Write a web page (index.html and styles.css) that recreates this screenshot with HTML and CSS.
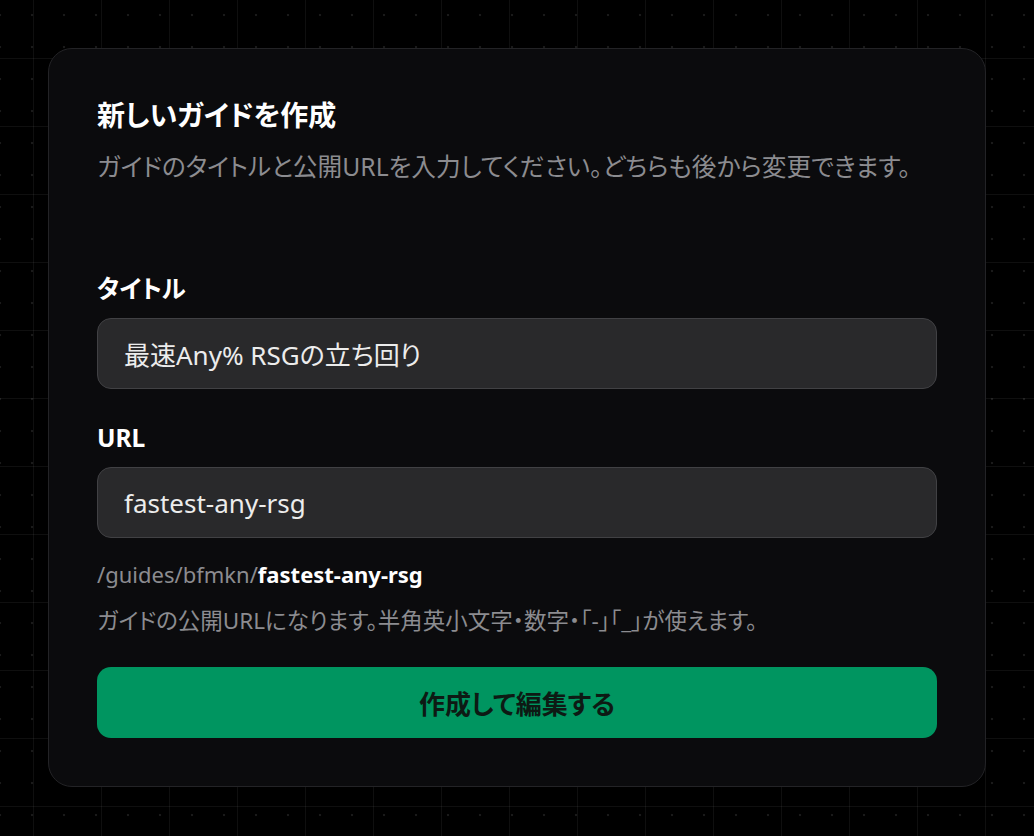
FILE: index.html
```html
<!DOCTYPE html>
<html lang="ja">
<head>
<meta charset="utf-8">
<title>新しいガイドを作成</title>
<link rel="stylesheet" href="styles.css">
</head>
<body>
<main class="page">
  <form class="card">
    <h1 class="title">新しいガイドを作成</h1>
    <p class="lead">ガイドのタイトルと公開URLを入力してください。どちらも後から変更できます。</p>

    <div class="field field-first">
      <label class="label" for="t">タイトル</label>
      <input class="input" id="t" type="text" value="最速Any% RSGの立ち回り">
    </div>

    <div class="field">
      <label class="label" for="u">URL</label>
      <input class="input" id="u" type="text" value="fastest-any-rsg">
      <p class="path">/guides/bfmkn/<strong>fastest-any-rsg</strong></p>
      <p class="hint">ガイドの公開URLになります。半角英小文字・数字・「-」「_」が使えます。</p>
    </div>

    <button class="submit" type="button">作成して編集する</button>
  </form>
</main>
</body>
</html>
```

FILE: styles.css
```css
* { box-sizing: border-box; }

html, body { margin: 0; height: 100%; }

body {
  background-color: #000;
  background-image:
    radial-gradient(circle, rgba(255,255,255,0.10) 0.9px, transparent 1.6px),
    linear-gradient(to right, rgba(255,255,255,0.06) 1px, transparent 1px),
    linear-gradient(to bottom, rgba(255,255,255,0.06) 1px, transparent 1px);
  background-size: 32px 32px, 68px 68px, 68px 68px;
  background-position: 16px -1px, 33px 0, 0 58px;
  font-family: "Noto Sans", "Noto Sans CJK JP", sans-serif;
  font-feature-settings: "palt";
  color: #f2f2f2;
}

.page {
  padding: 48px;
}

.card {
  width: 938px;
  height: 739px;
  margin: 0;
  padding: 48px;
  background: #0b0b0d;
  border: 1px solid #232326;
  border-radius: 24px;
  display: flex;
  flex-direction: column;
}

.title {
  margin: 0;
  font-size: 28px;
  line-height: 36px;
  font-weight: 700;
  color: #ffffff;
}

.lead {
  margin: 18px 0 0;
  font-size: 24.7px;
  line-height: 32px;
  color: #8c8c90;
}

.field {
  display: flex;
  flex-direction: column;
  margin-top: 33px;
}

.field-first {
  margin-top: 90px;
}

.label {
  font-size: 24.5px;
  line-height: 32px;
  font-weight: 700;
  color: #ffffff;
}

.input {
  margin-top: 13px;
  height: 71px;
  width: 100%;
  padding: 0 26px;
  background: #29292b;
  border: 1px solid #414144;
  border-radius: 14px;
  color: #ececec;
  font-family: "Noto Sans", "Noto Sans CJK JP", sans-serif;
  font-feature-settings: "palt";
  font-size: 26px;
  outline: none;
}

.path {
  margin: 22px 0 0;
  font-size: 22px;
  line-height: 28px;
  color: #8c8c90;
}

.path strong {
  color: #ffffff;
  font-weight: 700;
}

.hint {
  margin: 19px 0 0;
  font-size: 22.5px;
  line-height: 28px;
  color: #8c8c90;
}

.submit {
  margin-top: 32px;
  height: 71px;
  width: 100%;
  border: none;
  border-radius: 14px;
  background: #009560;
  color: #0d1a14;
  font-family: "Noto Sans", "Noto Sans CJK JP", sans-serif;
  font-feature-settings: "palt";
  font-size: 26px;
  font-weight: 700;
  cursor: pointer;
}
```
